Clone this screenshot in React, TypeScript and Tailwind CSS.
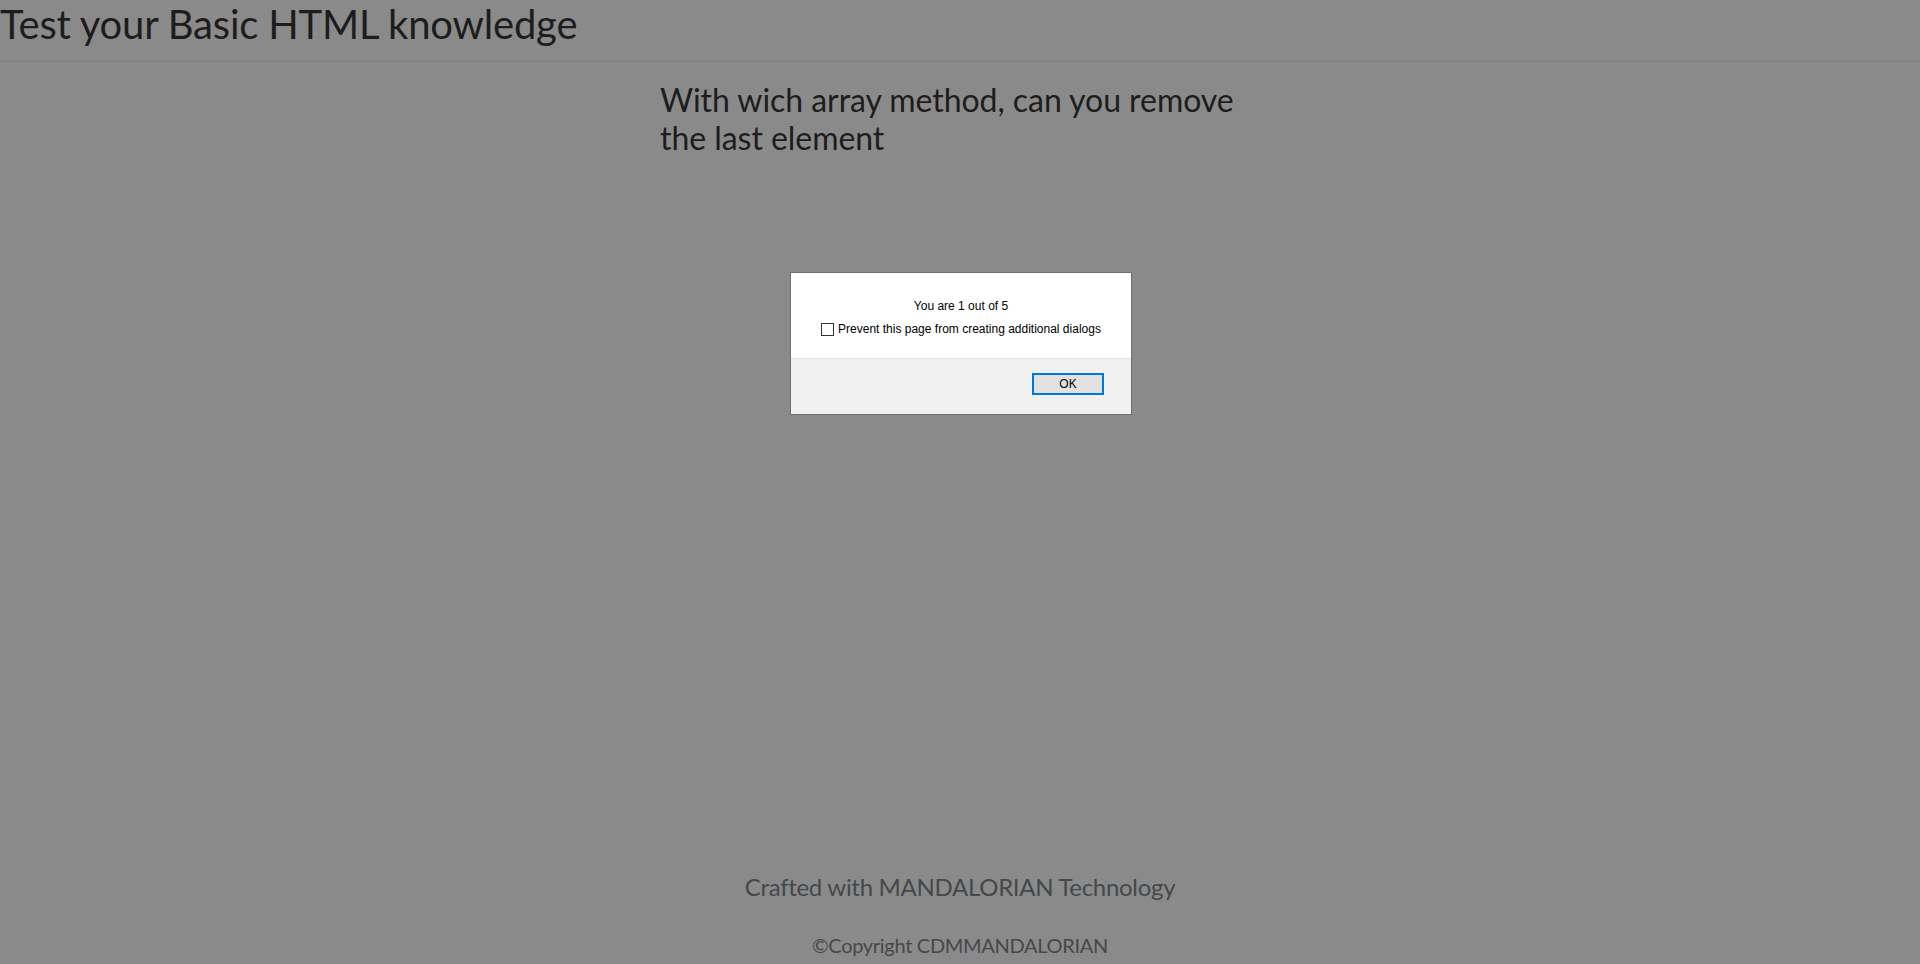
import React from 'react';

const App: React.FC = () => {
  return (
    <div
      className="relative min-h-screen h-[964px] bg-[#8a8a8a] flex flex-col overflow-hidden"
      style={{ fontFamily: 'Lato, "Open Sans", sans-serif' }}
    >
      {/* Header */}
      <header className="h-[62px] border-b border-[#7e7e7e]">
        <h1 className="text-[40px] leading-[48px] text-[#1d1d1d] tracking-[-0.2px]">Test your Basic HTML knowledge</h1>
      </header>

      {/* Question */}
      <main className="flex-grow">
        <div className="w-[600px] mx-auto mt-[19px]">
          <h2 className="text-[32px] leading-[38px] text-[#1d1d1d] tracking-[-0.05px]">
            With wich array method, can you remove the last element
          </h2>
        </div>
      </main>

      {/* Footer */}
      <footer className="flex flex-col items-center text-[#45484b] pb-[7px]">
        <h4 className="text-[24px] leading-[29px] tracking-[-0.3px]">Crafted with MANDALORIAN Technology</h4>
        <h5 className="mt-[32px] text-[20px] leading-[24px] tracking-[-0.3px]">©Copyright CDMMANDALORIAN</h5>
      </footer>

      {/* Browser alert dialog */}
      <div
        className="absolute left-[790px] top-[272px] w-[342px] h-[143px] bg-white border border-[#6f6f6f] flex flex-col"
        style={{ fontFamily: '"Liberation Sans", Arial, sans-serif' }}
      >
        <div className="flex-grow flex flex-col items-center pt-[26px] text-[12px] text-black">
          <p className="leading-[14px]">You are 1 out of 5</p>
          <label className="mt-[9px] flex items-center gap-[4px] leading-[14px]">
            <span className="w-[13px] h-[13px] border border-[#333] bg-white inline-block"></span>
            Prevent this page from creating additional dialogs
          </label>
        </div>
        <div className="h-[56px] bg-[#f0f0f0] border-t border-[#e3e3e3] flex justify-end items-start pt-[14px] pr-[27px]">
          <button className="w-[72px] h-[22px] bg-[#e1e1e1] border-2 border-[#0078d7] text-[12px] text-black leading-none">
            OK
          </button>
        </div>
      </div>
    </div>
  );
};

export default App;
